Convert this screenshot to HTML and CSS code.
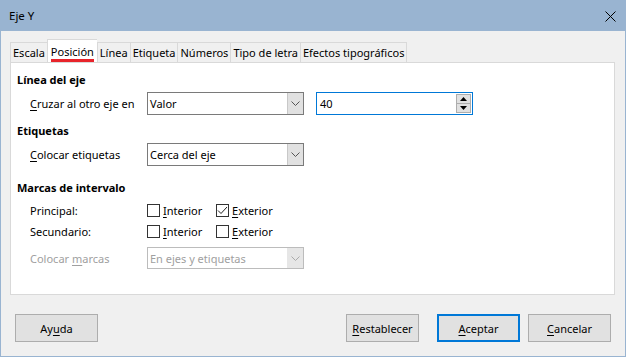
FILE: index.html
```html
<!DOCTYPE html>
<html lang="es">
<head>
    <meta charset="UTF-8">
    <title>Eje Y</title>
    <link rel="stylesheet" href="styles.css">
</head>
<body>
    <div class="window">
        <div class="titlebar">
            <span class="title">Eje Y</span>
            <svg class="close" width="11" height="11" viewBox="0 0 11 11">
                <path d="M0.5 0.5 L10.5 10.5 M10.5 0.5 L0.5 10.5" stroke="#000" stroke-width="1" fill="none"/>
            </svg>
        </div>

        <div class="tabs">
            <div class="tab">Escala</div>
            <div class="tab active">Posición</div>
            <div class="tab">Línea</div>
            <div class="tab">Etiqueta</div>
            <div class="tab">Números</div>
            <div class="tab">Tipo de letra</div>
            <div class="tab">Efectos tipográficos</div>
        </div>

        <div class="panel">
            <div class="heading">Línea del eje</div>
            <div class="row first">
                <span class="label"><u>C</u>ruzar al otro eje en</span>
                <div class="select">
                    <span>Valor</span>
                    <span class="drop"><svg width="9" height="5" viewBox="0 0 9 5"><path d="M0.5 0.5 L4.5 4.5 L8.5 0.5" stroke="#555" fill="none"/></svg></span>
                </div>
                <div class="spin">
                    <span>40</span>
                    <span class="spin-btns">
                        <span class="spin-btn"><svg width="7" height="4" viewBox="0 0 7 4"><path d="M3.5 0 L7 4 L0 4 Z" fill="#000"/></svg></span>
                        <span class="spin-btn"><svg width="7" height="4" viewBox="0 0 7 4"><path d="M0 0 L7 0 L3.5 4 Z" fill="#000"/></svg></span>
                    </span>
                </div>
            </div>

            <div class="heading second">Etiquetas</div>
            <div class="row first">
                <span class="label"><u>C</u>olocar etiquetas</span>
                <div class="select">
                    <span>Cerca del eje</span>
                    <span class="drop"><svg width="9" height="5" viewBox="0 0 9 5"><path d="M0.5 0.5 L4.5 4.5 L8.5 0.5" stroke="#555" fill="none"/></svg></span>
                </div>
            </div>

            <div class="heading third">Marcas de intervalo</div>
            <div class="row check-row top">
                <span class="label">Principal:</span>
                <label class="check"><span class="box"></span><u>I</u>nterior</label>
                <label class="check"><span class="box"><svg width="11" height="9" viewBox="0 0 11 9"><path d="M1 4.5 L4 7.5 L10 1" stroke="#222" fill="none"/></svg></span><u>E</u>xterior</label>
            </div>
            <div class="row check-row">
                <span class="label">Secundario:</span>
                <label class="check"><span class="box"></span><u>I</u>nterior</label>
                <label class="check"><span class="box"></span><u>E</u>xterior</label>
            </div>
            <div class="row disabled">
                <span class="label">Colocar <u>m</u>arcas</span>
                <div class="select small">
                    <span>En ejes y etiquetas</span>
                    <span class="drop"><svg width="9" height="5" viewBox="0 0 9 5"><path d="M0.5 0.5 L4.5 4.5 L8.5 0.5" stroke="#aaa" fill="none"/></svg></span>
                </div>
            </div>
        </div>

        <div class="buttons">
            <button class="btn">Ay<u>u</u>da</button>
            <span class="spacer"></span>
            <button class="btn reset"><u>R</u>establecer</button>
            <button class="btn default"><u>A</u>ceptar</button>
            <button class="btn"><u>C</u>ancelar</button>
        </div>
    </div>
</body>
</html>
```

FILE: styles.css
```css
body {
    margin: 0;
    font-family: 'Noto Sans', 'Open Sans', sans-serif;
    font-size: 11px;
    color: #000;
}
u {
    text-decoration-thickness: 1px;
    text-underline-offset: 2px;
}
.window {
    width: 626px;
    height: 357px;
    box-sizing: border-box;
    border: 1px solid #99b4d1;
    border-top: none;
    background-color: #f0f0f0;
}
.titlebar {
    height: 31px;
    margin: 0 -1px;
    background-color: #99b4d1;
    display: flex;
    align-items: center;
    justify-content: space-between;
    padding: 0 10px 0 9px;
}
.title {
    font-size: 11.5px;
    margin-top: -1px;
}
.close {
    margin-top: 1px;
}
.tabs {
    display: flex;
    align-items: flex-end;
    height: 23px;
    margin: 8px 0 0 9px;
}
.tab {
    height: 20px;
    line-height: 19px;
    padding: 0 2px;
    box-sizing: border-box;
    border: 1px solid #d9d9d9;
    border-bottom: none;
    border-right: none;
    background-color: #f0f0f0;
}
.tab:last-child {
    border-right: 1px solid #d9d9d9;
}
.tab.active {
    height: 23px;
    line-height: 24px;
    background-color: #fff;
    position: relative;
    padding: 0 3px;
}
.tab.active::after {
    content: "";
    position: absolute;
    left: 3px;
    right: 3px;
    bottom: 0;
    height: 3px;
    background-color: #e8242b;
}
.tab.active + .tab {
    border-left: 1px solid #d9d9d9;
}
.panel {
    height: 233px;
    box-sizing: border-box;
    margin: 0 10px 0 9px;
    border: 1px solid #d9d9d9;
    background-color: #fff;
    padding: 9px 0 0 6px;
}
.heading {
    font-weight: bold;
    height: 16px;
    line-height: 16px;
}
.heading.second {
    margin-top: 8px;
}
.heading.third {
    margin-top: 14px;
}
.row {
    display: flex;
    align-items: center;
    padding-left: 13px;
}
.row.first {
    margin-top: 4px;
}
.label {
    width: 117px;
}
.select {
    width: 157px;
    height: 23px;
    box-sizing: border-box;
    border: 1px solid #7a7a7a;
    display: flex;
    align-items: center;
    justify-content: space-between;
    padding-left: 2px;
}
.select.small {
    height: 22px;
}
.drop {
    width: 16px;
    height: 100%;
    box-sizing: border-box;
    background-color: #e1e1e1;
    border-left: 1px solid #c8c8c8;
    display: flex;
    align-items: center;
    justify-content: center;
}
.spin {
    margin-left: 12px;
    width: 157px;
    height: 23px;
    box-sizing: border-box;
    border: 1px solid #0078d7;
    display: flex;
    align-items: center;
    justify-content: space-between;
    padding: 0 1px 0 3px;
}
.spin-btns {
    display: flex;
    flex-direction: column;
    height: 19px;
}
.spin-btn {
    width: 15px;
    height: 10px;
    box-sizing: border-box;
    background-color: #e1e1e1;
    border: 1px solid #adadad;
    display: flex;
    align-items: center;
    justify-content: center;
}
.spin-btn + .spin-btn {
    height: 9px;
    border-top: none;
}
.check-row {
    height: 21px;
}
.check-row.top {
    margin-top: 4px;
}
.check {
    display: flex;
    align-items: center;
    width: 69px;
}
.box {
    width: 13px;
    height: 13px;
    box-sizing: border-box;
    border: 1px solid #333;
    margin-right: 3px;
    display: flex;
    align-items: center;
    justify-content: center;
}
.disabled {
    margin-top: 5px;
    color: #a0a0a0;
}
.disabled .select {
    border-color: #bcbcbc;
    background-color: #fff;
}
.disabled .drop {
    background-color: #e6e6e6;
    border-left-color: #e6e6e6;
}
.buttons {
    display: flex;
    margin: 19px 14px 0 14px;
}
.spacer {
    flex: 1;
}
.btn {
    width: 83px;
    height: 28px;
    box-sizing: border-box;
    background-color: #e1e1e1;
    border: 1px solid #adadad;
    font-family: inherit;
    font-size: 11px;
    color: #000;
    padding: 0;
}
.btn.reset {
    width: 73px;
}
.btn.default {
    margin: 0 8px 0 18px;
    border: 2px solid #0078d7;
}
```
